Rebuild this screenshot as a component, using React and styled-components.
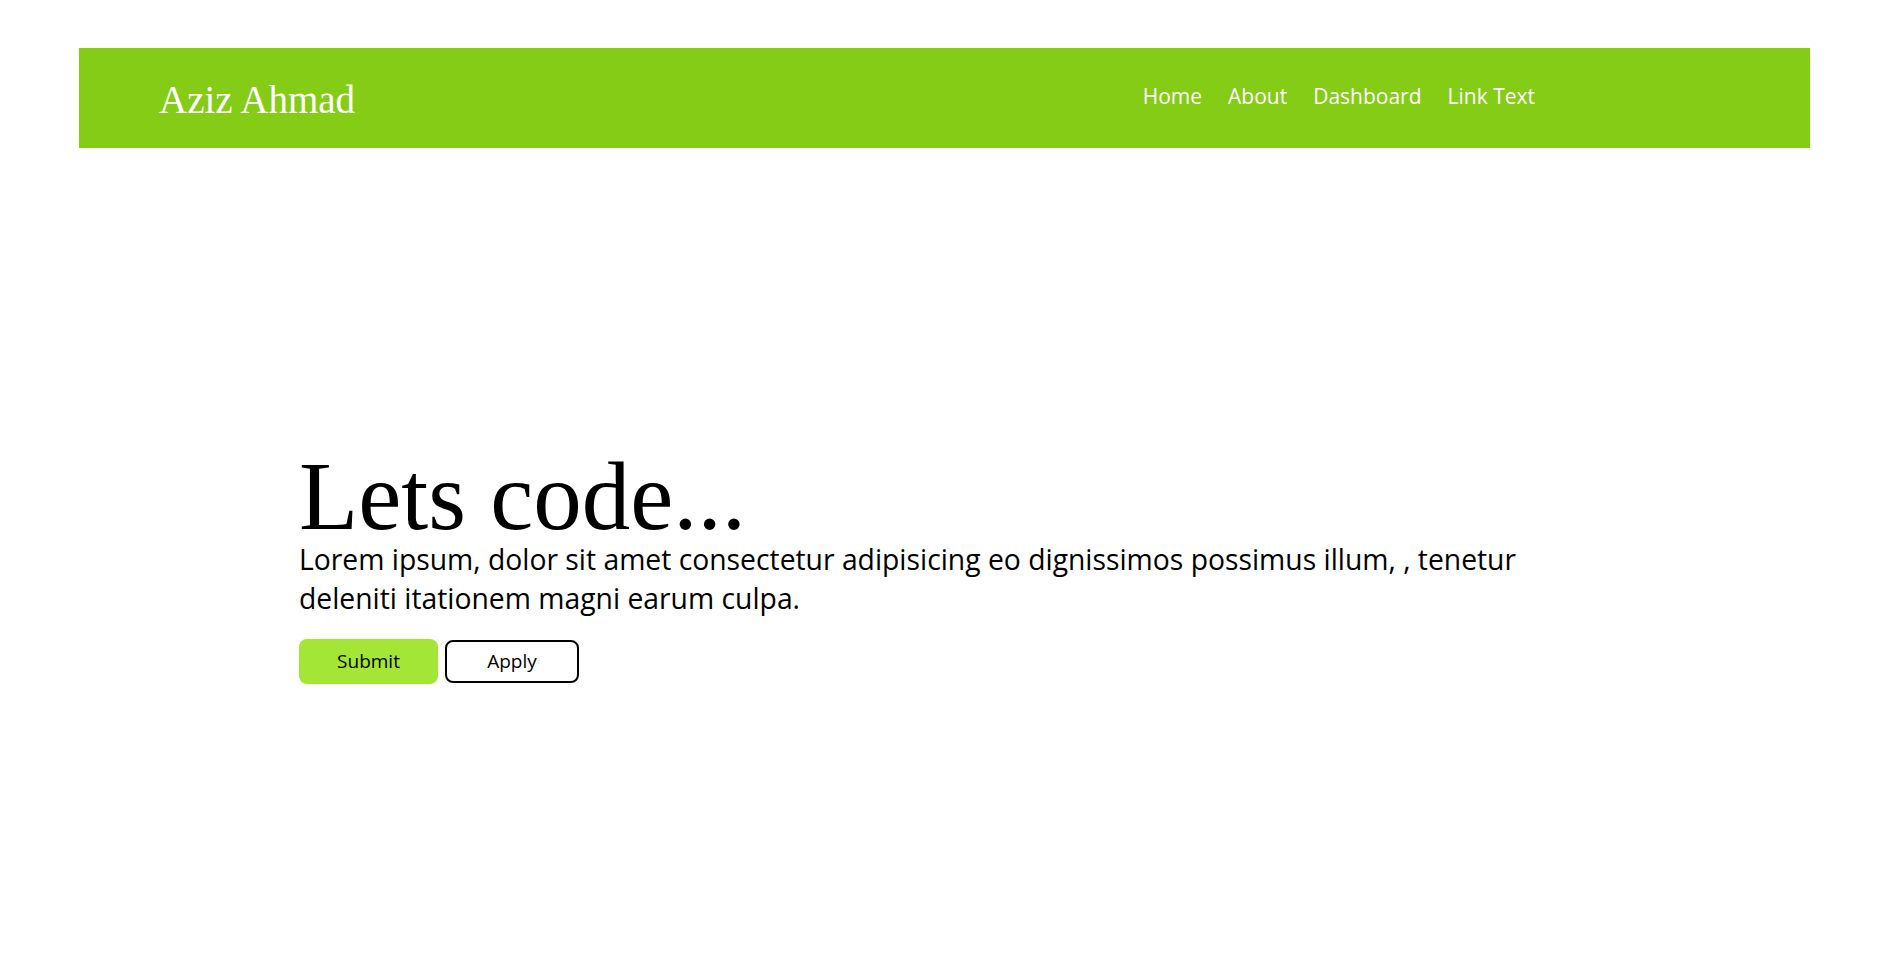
import React from 'react';
import styled, { createGlobalStyle } from 'styled-components';

const GlobalStyle = createGlobalStyle`
  html, body {
    margin: 0;
    padding: 0;
    background: #ffffff;
  }
  body {
    font-family: "Open Sans", "Noto Sans", sans-serif;
    color: #000;
  }
`;

const Page = styled.div`
  min-height: 100vh;
  display: flex;
  flex-direction: column;
`;

const NavBar = styled.header`
  margin: 48px 0 0 79px;
  width: 1731px;
  height: 100px;
  box-sizing: border-box;
  padding: 0 275px 0 80px;
  background: #84cc16;
  display: flex;
  align-items: center;
  justify-content: space-between;
`;

const Brand = styled.div`
  font-family: "Liberation Serif", "DejaVu Serif", serif;
  font-size: 39px;
  color: #ffffff;
  margin-top: 2px;
`;

const Links = styled.nav`
  display: flex;
  gap: 26px;
  margin-top: -4px;
`;

const NavLink = styled.a`
  font-size: 21px;
  color: #ffffff;
  text-decoration: none;
  cursor: pointer;
`;

const Hero = styled.main`
  flex: 1;
  display: flex;
  align-items: center;
  padding: 8px 0 0 299px;
`;

const HeroInner = styled.div`
  max-width: 1260px;
`;

const Title = styled.h1`
  font-family: "Liberation Serif", "DejaVu Serif", serif;
  font-weight: 400;
  font-size: 97px;
  line-height: 96px;
  margin: 0 0 -5px;
`;

const Lead = styled.p`
  font-size: 28.3px;
  line-height: 39px;
  margin: 0 0 21px;
`;

const Actions = styled.div`
  display: flex;
  gap: 7px;
  align-items: center;
`;

const Button = styled.button`
  font-family: "Open Sans", "Noto Sans", sans-serif;
  font-size: 19px;
  color: #000;
  height: ${props => props.$outline ? '43px' : '45px'};
  width: ${props => props.$outline ? '134px' : '139px'};
  border-radius: 8px;
  border: ${props => props.$outline ? '2px solid #000' : 'none'};
  background: ${props => props.$outline ? '#ffffff' : '#a3e635'};
  cursor: pointer;
  padding: 0;
`;

const App = () => {
  return <Page>
    <GlobalStyle />
    <NavBar>
      <Brand>Aziz Ahmad</Brand>
      <Links>
        <NavLink>Home</NavLink>
        <NavLink>About</NavLink>
        <NavLink>Dashboard</NavLink>
        <NavLink>Link Text</NavLink>
      </Links>
    </NavBar>
    <Hero>
      <HeroInner>
        <Title>Lets code...</Title>
        <Lead>
          Lorem ipsum, dolor sit amet consectetur adipisicing eo dignissimos possimus illum, , tenetur deleniti itationem magni earum culpa.
        </Lead>
        <Actions>
          <Button>Submit</Button>
          <Button $outline>Apply</Button>
        </Actions>
      </HeroInner>
    </Hero>
  </Page>
}

export default App;
